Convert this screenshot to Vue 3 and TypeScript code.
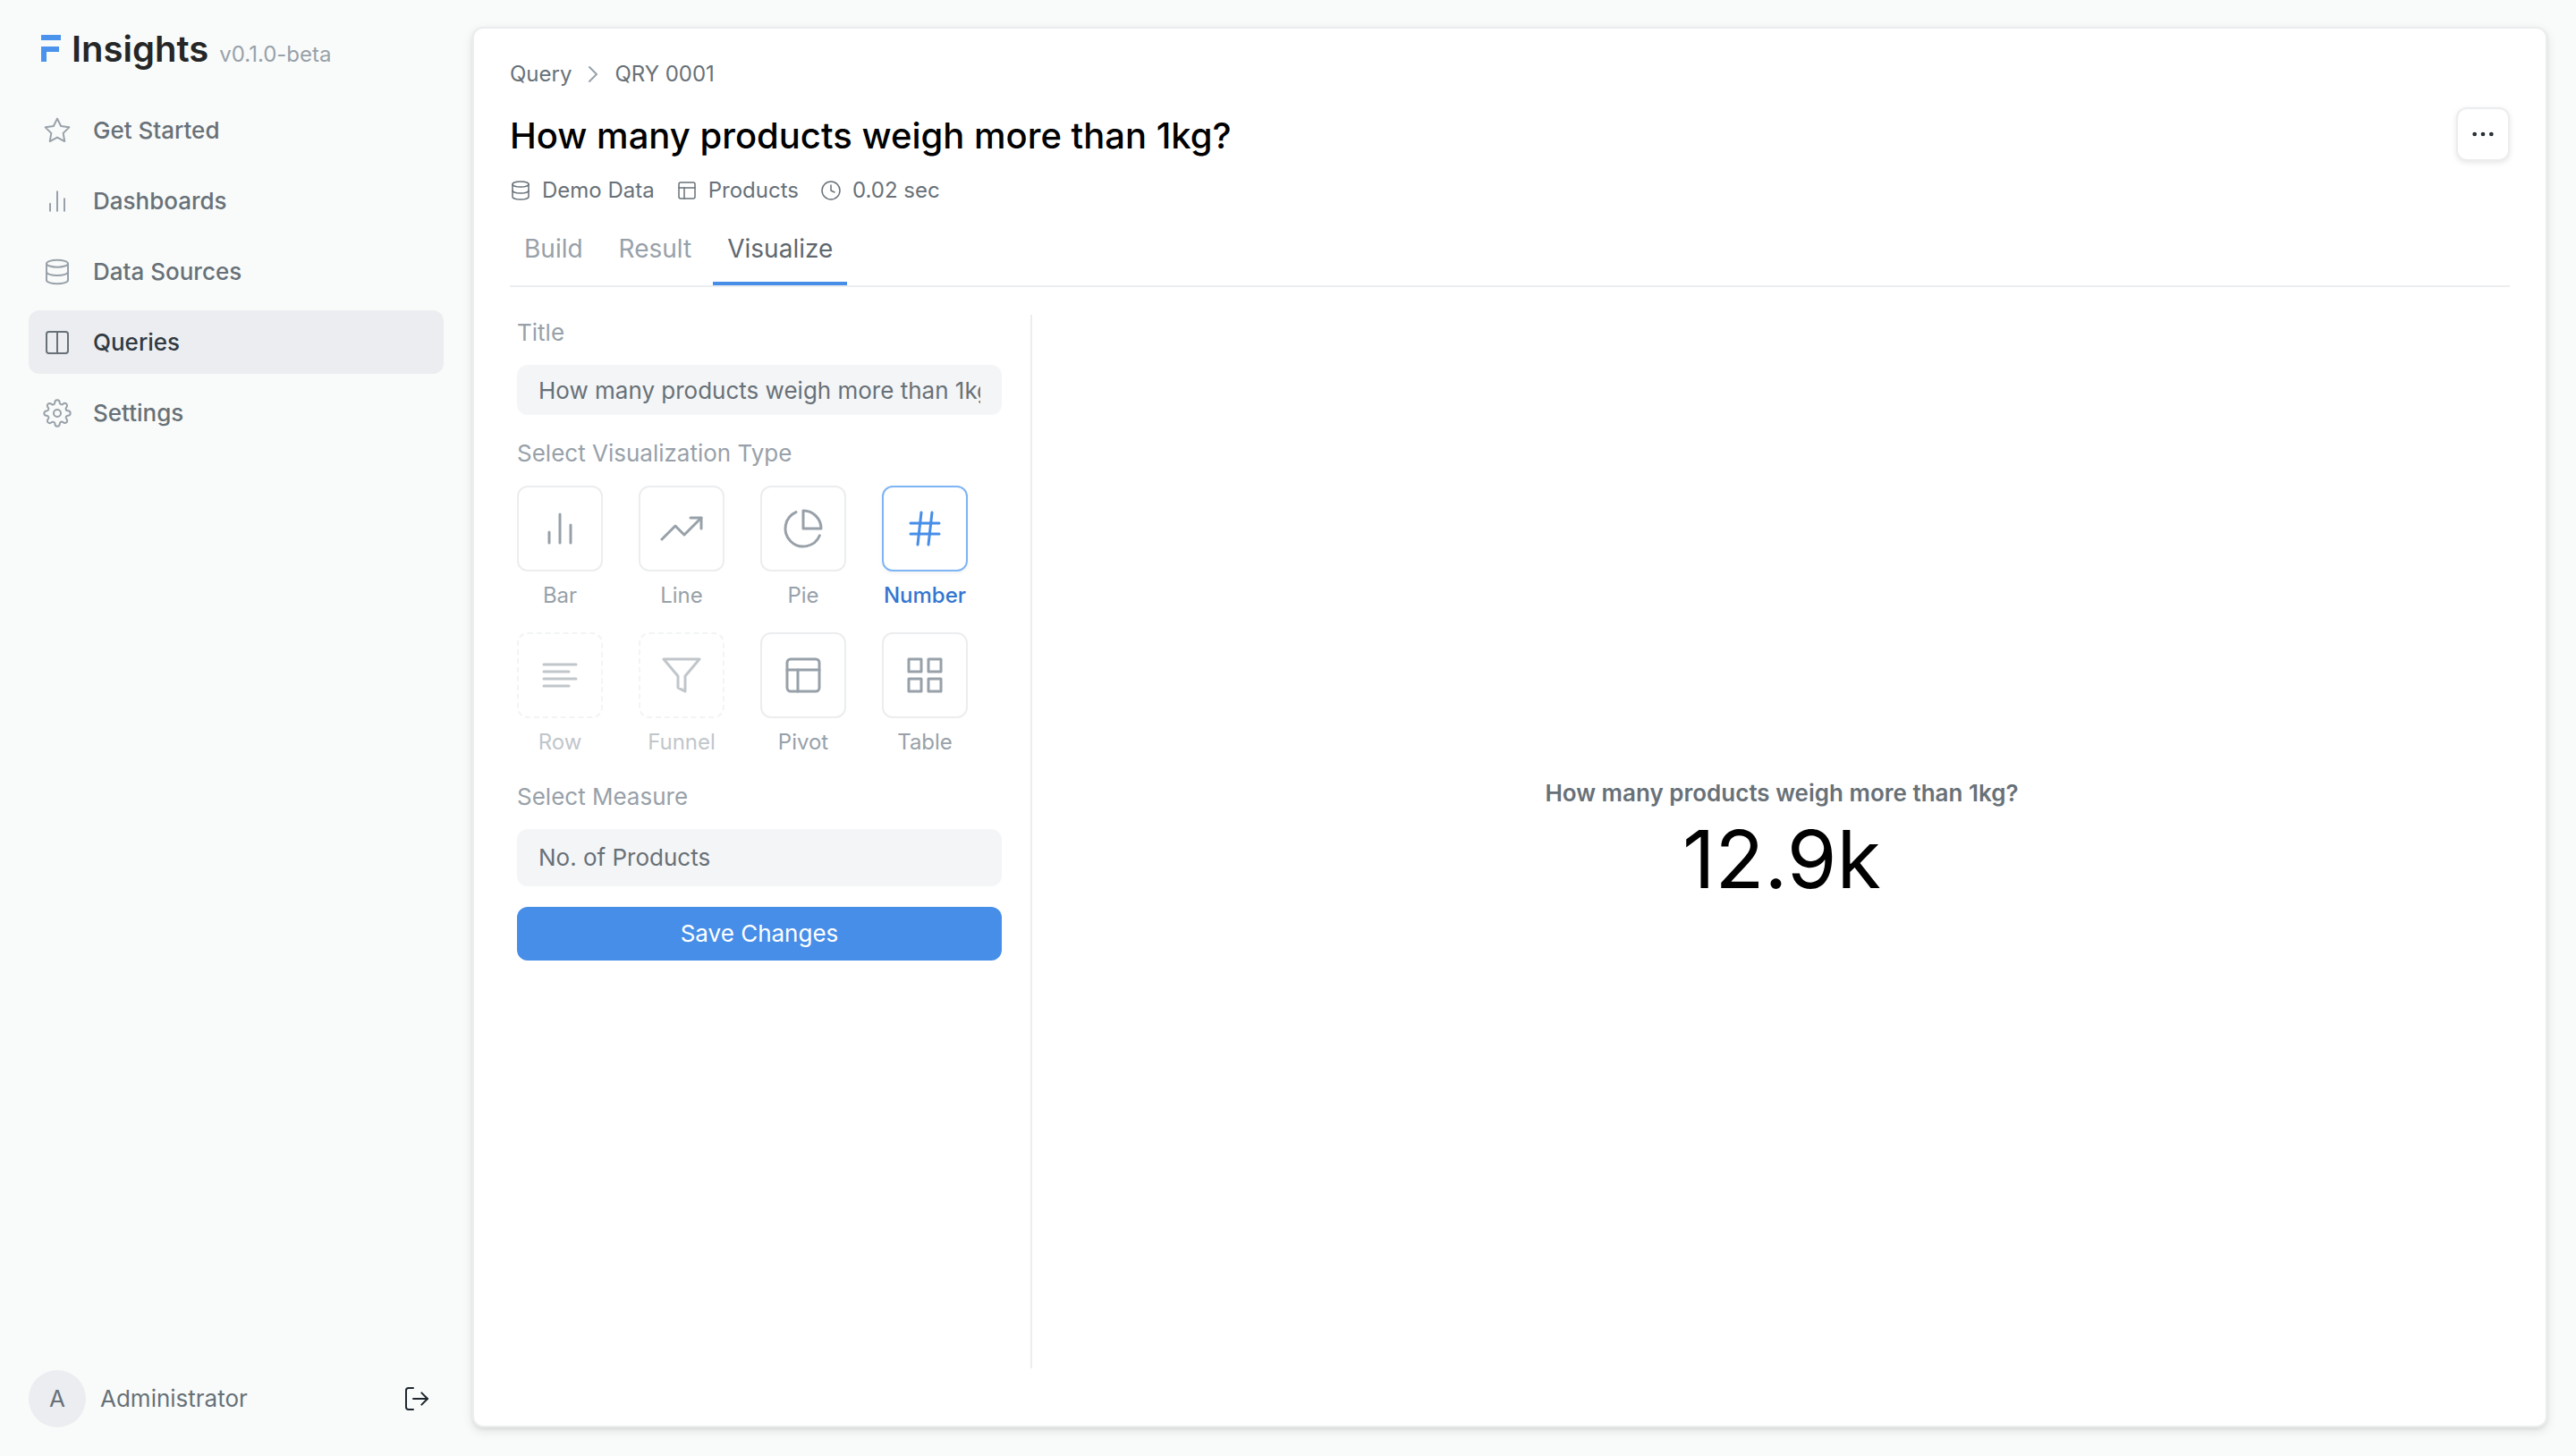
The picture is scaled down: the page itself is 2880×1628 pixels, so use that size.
<script setup lang="ts">
import { ref } from 'vue'

type IconName = keyof typeof icons

const icons = {
  star: '<polygon points="12 2 15.09 8.26 22 9.27 17 14.14 18.18 21.02 12 17.77 5.82 21.02 7 14.14 2 9.27 8.91 8.26 12 2"/>',
  bars: '<line x1="18" y1="20" x2="18" y2="10"/><line x1="12" y1="20" x2="12" y2="4"/><line x1="6" y1="20" x2="6" y2="14"/>',
  database: '<ellipse cx="12" cy="5" rx="9" ry="3"/><path d="M21 12c0 1.66-4 3-9 3s-9-1.34-9-3"/><path d="M3 5v14c0 1.66 4 3 9 3s9-1.34 9-3V5"/>',
  columns: '<path d="M12 3h7a2 2 0 0 1 2 2v14a2 2 0 0 1-2 2h-7m0-18H5a2 2 0 0 0-2 2v14a2 2 0 0 0 2 2h7m0-18v18"/>',
  settings: '<circle cx="12" cy="12" r="3"/><path d="M19.4 15a1.65 1.65 0 0 0 .33 1.82l.06.06a2 2 0 0 1 0 2.83 2 2 0 0 1-2.83 0l-.06-.06a1.65 1.65 0 0 0-1.82-.33 1.65 1.65 0 0 0-1 1.51V21a2 2 0 0 1-2 2 2 2 0 0 1-2-2v-.09A1.65 1.65 0 0 0 9 19.4a1.65 1.65 0 0 0-1.82.33l-.06.06a2 2 0 0 1-2.83 0 2 2 0 0 1 0-2.83l.06-.06a1.65 1.65 0 0 0 .33-1.82 1.65 1.65 0 0 0-1.51-1H3a2 2 0 0 1-2-2 2 2 0 0 1 2-2h.09A1.65 1.65 0 0 0 4.6 9a1.65 1.65 0 0 0-.33-1.82l-.06-.06a2 2 0 0 1 0-2.83 2 2 0 0 1 2.83 0l.06.06a1.65 1.65 0 0 0 1.82.33H9a1.65 1.65 0 0 0 1-1.51V3a2 2 0 0 1 2-2 2 2 0 0 1 2 2v.09a1.65 1.65 0 0 0 1 1.51 1.65 1.65 0 0 0 1.82-.33l.06-.06a2 2 0 0 1 2.83 0 2 2 0 0 1 0 2.83l-.06.06a1.65 1.65 0 0 0-.33 1.82V9a1.65 1.65 0 0 0 1.51 1H21a2 2 0 0 1 2 2 2 2 0 0 1-2 2h-.09a1.65 1.65 0 0 0-1.51 1z"/>',
  logout: '<path d="M9 21H5a2 2 0 0 1-2-2V5a2 2 0 0 1 2-2h4"/><polyline points="16 17 21 12 16 7"/><line x1="21" y1="12" x2="9" y2="12"/>',
  chevron: '<polyline points="9 18 15 12 9 6"/>',
  more: '<circle cx="12" cy="12" r="1"/><circle cx="19" cy="12" r="1"/><circle cx="5" cy="12" r="1"/>',
  layout: '<rect x="3" y="3" width="18" height="18" rx="2" ry="2"/><line x1="3" y1="9" x2="21" y2="9"/><line x1="9" y1="21" x2="9" y2="9"/>',
  clock: '<circle cx="12" cy="12" r="10"/><polyline points="12 6 12 12 16 14"/>',
  trending: '<polyline points="23 6 13.5 15.5 8.5 10.5 1 18"/><polyline points="17 6 23 6 23 12"/>',
  pie: '<path d="M21.21 15.89A10 10 0 1 1 8 2.83"/><path d="M22 12A10 10 0 0 0 12 2v10z"/>',
  hash: '<line x1="4" y1="9" x2="20" y2="9"/><line x1="4" y1="15" x2="20" y2="15"/><line x1="10" y1="3" x2="8" y2="21"/><line x1="16" y1="3" x2="14" y2="21"/>',
  rows: '<line x1="17" y1="10" x2="3" y2="10"/><line x1="21" y1="6" x2="3" y2="6"/><line x1="21" y1="14" x2="3" y2="14"/><line x1="17" y1="18" x2="3" y2="18"/>',
  funnel: '<polygon points="22 3 2 3 10 12.46 10 19 14 21 14 12.46 22 3"/>',
  grid: '<rect x="3" y="3" width="7" height="7"/><rect x="14" y="3" width="7" height="7"/><rect x="14" y="14" width="7" height="7"/><rect x="3" y="14" width="7" height="7"/>',
}

const nav: { label: string; icon: IconName }[] = [
  { label: 'Get Started', icon: 'star' },
  { label: 'Dashboards', icon: 'bars' },
  { label: 'Data Sources', icon: 'database' },
  { label: 'Queries', icon: 'columns' },
  { label: 'Settings', icon: 'settings' },
]
const activeNav = 'Queries'

const meta: { label: string; icon: IconName }[] = [
  { label: 'Demo Data', icon: 'database' },
  { label: 'Products', icon: 'layout' },
  { label: '0.02 sec', icon: 'clock' },
]

const tabs = ['Build', 'Result', 'Visualize']
const activeTab = ref('Visualize')

const types: { label: string; icon: IconName; disabled?: boolean }[] = [
  { label: 'Bar', icon: 'bars' },
  { label: 'Line', icon: 'trending' },
  { label: 'Pie', icon: 'pie' },
  { label: 'Number', icon: 'hash' },
  { label: 'Row', icon: 'rows', disabled: true },
  { label: 'Funnel', icon: 'funnel', disabled: true },
  { label: 'Pivot', icon: 'layout' },
  { label: 'Table', icon: 'grid' },
]
const activeType = ref('Number')

const title = ref('How many products weigh more than 1kg?')
const measure = ref('No. of Products')
</script>

<template>
  <div class="app">
    <aside class="sidebar">
      <div class="brand">
        <svg class="logo" viewBox="0 0 22 30" aria-hidden="true">
          <path d="M0 0h22v6H0zM0 13h20v6H6v11H0z" fill="currentColor" />
        </svg>
        <span class="brand-name">Insights</span>
        <span class="version">v0.1.0-beta</span>
      </div>
      <nav class="nav">
        <a v-for="item in nav" :key="item.label" href="#" class="nav-item" :class="{ active: item.label === activeNav }">
          <svg class="icon" viewBox="0 0 24 24" v-html="icons[item.icon]" />
          <span>{{ item.label }}</span>
        </a>
      </nav>
      <div class="user">
        <span class="avatar">A</span>
        <span class="user-name">Administrator</span>
        <button class="logout" type="button" aria-label="Log out">
          <svg class="icon" viewBox="0 0 24 24" v-html="icons.logout" />
        </button>
      </div>
    </aside>

    <main class="card">
      <nav class="breadcrumb" aria-label="Breadcrumb">
        <a href="#">Query</a>
        <svg class="icon" viewBox="0 0 24 24" v-html="icons.chevron" />
        <a href="#">QRY 0001</a>
      </nav>
      <header class="header">
        <h1>{{ title }}</h1>
        <button class="more" type="button" aria-label="More actions">
          <svg class="icon" viewBox="0 0 24 24" v-html="icons.more" />
        </button>
      </header>
      <div class="meta">
        <span v-for="item in meta" :key="item.label" class="meta-item">
          <svg class="icon small" viewBox="0 0 24 24" v-html="icons[item.icon]" />
          <span>{{ item.label }}</span>
        </span>
      </div>
      <div class="tabs" role="tablist">
        <button
          v-for="tab in tabs"
          :key="tab"
          type="button"
          role="tab"
          class="tab"
          :class="{ active: tab === activeTab }"
          :aria-selected="tab === activeTab"
          @click="activeTab = tab"
        >
          {{ tab }}
        </button>
      </div>

      <div class="content">
        <form class="options" @submit.prevent>
          <div class="field">
            <label class="label" for="chart-title">Title</label>
            <input id="chart-title" v-model="title" class="input" type="text" />
          </div>
          <div class="field">
            <span id="type-label" class="label">Select Visualization Type</span>
            <div class="types" role="group" aria-labelledby="type-label">
              <button
                v-for="type in types"
                :key="type.label"
                type="button"
                class="type"
                :class="{ active: type.label === activeType }"
                :disabled="type.disabled"
                @click="activeType = type.label"
              >
                <span class="type-box">
                  <svg class="icon large" viewBox="0 0 24 24" v-html="icons[type.icon]" />
                </span>
                <span class="type-label">{{ type.label }}</span>
              </button>
            </div>
          </div>
          <div class="field">
            <label class="label" for="measure">Select Measure</label>
            <select id="measure" v-model="measure" class="input select">
              <option>No. of Products</option>
            </select>
          </div>
          <button class="save" type="submit">Save Changes</button>
        </form>
        <section class="preview">
          <div class="preview-title">{{ title }}</div>
          <div class="preview-value">12.9k</div>
        </section>
      </div>
    </main>
  </div>
</template>

<style>
body {
  background: #f9fbfa;
}
</style>

<style scoped>
.app {
  display: flex;
  box-sizing: border-box;
  min-height: 100vh;
  padding: 30px 32px 32px 0;
  font-family: Inter, 'Liberation Sans', sans-serif;
  font-size: 26px;
  line-height: 40px;
  color: #687178;
}
.app * {
  box-sizing: border-box;
}
button,
input,
select {
  margin: 0;
  padding: 0;
  border: 0;
  background: none;
  font: inherit;
  color: inherit;
}
a {
  color: inherit;
  text-decoration: none;
}
.icon {
  flex: none;
  width: 32px;
  height: 32px;
  fill: none;
  stroke: currentColor;
  stroke-width: 1.5;
  stroke-linecap: round;
  stroke-linejoin: round;
}
.icon.small {
  width: 24px;
  height: 24px;
}
.icon.large {
  width: 48px;
  height: 48px;
}

.sidebar {
  display: flex;
  flex: none;
  flex-direction: column;
  width: 528px;
  padding: 0 32px;
}
.brand {
  display: flex;
  align-items: baseline;
  height: 80px;
  padding-left: 14px;
  line-height: 50px;
}
.logo {
  width: 22px;
  height: 30px;
  margin-right: 12px;
  color: #4b93ec;
}
.brand-name {
  font-size: 40px;
  font-weight: 600;
  color: #252627;
}
.version {
  margin-left: 12px;
  font-size: 24px;
  color: #98a1a9;
}
.nav {
  display: flex;
  flex-direction: column;
  gap: 8px;
}
.nav-item {
  display: flex;
  align-items: center;
  gap: 24px;
  height: 71px;
  padding: 0 16px;
  border-radius: 12px;
  font-weight: 500;
}
.nav-item .icon {
  color: #98a1a9;
}
.nav-item.active {
  background: #ebedf0;
  color: #313940;
}
.nav-item.active .icon {
  color: #687178;
}
.user {
  display: flex;
  align-items: center;
  margin-top: auto;
}
.avatar {
  width: 64px;
  border-radius: 50%;
  background: #ebedf0;
  line-height: 64px;
  text-align: center;
}
.user-name {
  margin-left: 16px;
}
.logout {
  display: flex;
  margin-left: auto;
  margin-right: 14px;
  color: #1f272e;
}

.card {
  display: flex;
  flex: 1;
  flex-direction: column;
  min-width: 0;
  padding: 33px 40px 64px;
  border: 2px solid #ebedef;
  border-radius: 12px;
  background: #fff;
  box-shadow: 0 4px 12px rgba(0, 0, 0, 0.1), 0 2px 4px rgba(0, 0, 0, 0.06);
}
.breadcrumb {
  display: flex;
  align-items: center;
  gap: 8px;
  font-size: 24px;
  line-height: 36px;
}
.breadcrumb .icon {
  color: #98a1a9;
}
.header {
  display: flex;
  align-items: flex-start;
  justify-content: space-between;
  margin-top: 19px;
}
h1 {
  margin: 0;
  font-size: 40px;
  font-weight: 500;
  line-height: 64px;
  color: #000;
}
.more {
  display: flex;
  align-items: center;
  justify-content: center;
  width: 60px;
  height: 60px;
  border: 2px solid #ebedef;
  border-radius: 12px;
  background: #fff;
  color: #1f272e;
  box-shadow: 0 2px 6px rgba(0, 0, 0, 0.1);
}
.meta {
  display: flex;
  gap: 24px;
  margin-top: 11px;
  font-size: 24px;
  line-height: 36px;
}
.meta-item {
  display: flex;
  align-items: center;
  gap: 12px;
}
.tabs {
  display: flex;
  gap: 8px;
  margin-top: 27px;
  border-bottom: 2px solid #ebedef;
  font-size: 28px;
}
.tab {
  padding: 0 16px 17px;
  border-bottom: 4px solid transparent;
  color: #98a1a9;
}
.tab.active {
  border-color: #478ee8;
  color: #5f686f;
}

.content {
  display: flex;
  flex: 1;
  margin-top: 31px;
}
.options {
  display: flex;
  flex: none;
  flex-direction: column;
  gap: 23px;
  width: 584px;
  padding: 0 32px 0 8px;
  border-right: 2px solid #ebedef;
}
.field {
  display: flex;
  flex-direction: column;
  gap: 16px;
}
.label {
  color: #98a1a9;
}
.input {
  width: 100%;
  height: 56px;
  padding: 0 24px;
  border-radius: 12px;
  background: #f4f5f6;
}
.select {
  height: 64px;
  appearance: none;
}
.types {
  display: grid;
  grid-template-columns: repeat(4, 96px);
  gap: 23px 40px;
}
.type {
  display: flex;
  flex-direction: column;
  align-items: center;
  gap: 9px;
  color: #98a1a9;
  font-size: 24px;
  line-height: 36px;
}
.type-box {
  display: flex;
  align-items: center;
  justify-content: center;
  width: 96px;
  height: 96px;
  border: 2px solid #ebedef;
  border-radius: 12px;
}
.type.active .type-box {
  border-color: #7fb4f5;
  color: #478ee8;
  box-shadow: 0 2px 4px rgba(0, 0, 0, 0.05);
}
.type.active {
  color: #3575cf;
  font-weight: 500;
}
.type:disabled {
  opacity: 0.6;
}
.type:disabled .type-box {
  border-style: dashed;
}
.save {
  height: 60px;
  border-radius: 12px;
  background: #478ee8;
  color: #fff;
}
.preview {
  display: flex;
  flex: 1;
  flex-direction: column;
  align-items: center;
  justify-content: center;
  padding-left: 24px;
}
.preview-title {
  font-weight: 600;
}
.preview-value {
  font-size: 90px;
  line-height: 108px;
  color: #000;
}
</style>
